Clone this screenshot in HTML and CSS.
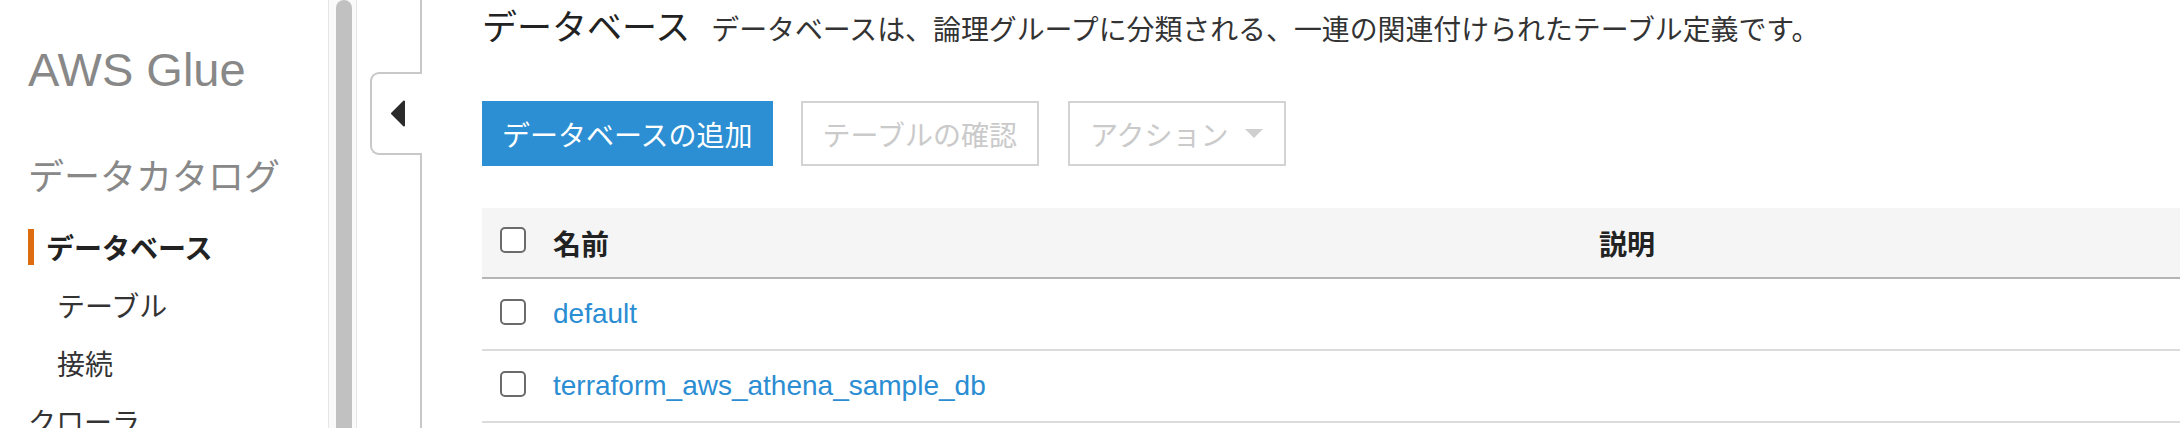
FILE: index.html
```html
<!DOCTYPE html>
<html lang="ja">
<head>
  <meta charset="UTF-8">
  <meta name="viewport" content="width=device-width, initial-scale=1.0">
  <title>AWS Glue - データベース</title>
  <link rel="stylesheet" href="styles.css">
</head>
<body>
  <div class="layout">
    <aside class="sidebar">
      <div class="brand">AWS Glue</div>
      <div class="nav-group">データカタログ</div>
      <ul class="nav-list">
        <li class="nav-item active">データベース</li>
        <li class="nav-item sub">テーブル</li>
        <li class="nav-item sub">接続</li>
        <li class="nav-item top">クローラ</li>
      </ul>
    </aside>

    <div class="scrollbar"><div class="scrollbar-thumb"></div></div>
    <div class="gutter"></div>

    <main class="content">
      <button class="collapse-tab" aria-label="ナビゲーションを閉じる">
        <svg width="16" height="27" viewBox="0 0 16 27">
          <path d="M14 1.5 L14 25.5 L2 13.5 Z" fill="#2b2b2b" stroke="#2b2b2b" stroke-width="2" stroke-linejoin="round"/>
        </svg>
      </button>

      <div class="page-header">
        <h1 class="page-title">データベース</h1>
        <p class="page-desc">データベースは、論理グループに分類される、一連の関連付けられたテーブル定義です。</p>
      </div>

      <div class="toolbar">
        <button class="btn btn-primary">データベースの追加</button>
        <button class="btn btn-disabled">テーブルの確認</button>
        <button class="btn btn-disabled btn-dropdown">
          アクション
          <svg width="18" height="9" viewBox="0 0 18 9">
            <path d="M0 0 H18 L9 9 Z" fill="#cfcfcf"/>
          </svg>
        </button>
      </div>

      <table class="db-table">
        <colgroup>
          <col class="col-check">
          <col class="col-name">
          <col>
        </colgroup>
        <thead>
          <tr>
            <th class="cell-check"><span class="checkbox"></span></th>
            <th>名前</th>
            <th>説明</th>
          </tr>
        </thead>
        <tbody>
          <tr>
            <td class="cell-check"><span class="checkbox"></span></td>
            <td><a href="#" class="db-link">default</a></td>
            <td></td>
          </tr>
          <tr>
            <td class="cell-check"><span class="checkbox"></span></td>
            <td><a href="#" class="db-link">terraform_aws_athena_sample_db</a></td>
            <td></td>
          </tr>
        </tbody>
      </table>
    </main>
  </div>
</body>
</html>
```

FILE: styles.css
```css
:root {
  --font: "Liberation Sans", "Noto Sans CJK JP", sans-serif;
  --text-primary: #222222;
  --text-body: #333333;
  --text-muted: #888888;
  --blue: #2d8fd3;
  --link: #2b8dd2;
  --orange: #dd6b10;
  --border: #c8c8c8;
  --disabled: #d3d3d3;
}

* {
  margin: 0;
  padding: 0;
  box-sizing: border-box;
}

html, body {
  height: 100%;
}

body {
  font-family: var(--font);
  background: #ffffff;
  color: var(--text-body);
  overflow: hidden;
}

.layout {
  display: flex;
  height: 100%;
}

/* sidebar */

.sidebar {
  width: 328px;
  flex-shrink: 0;
  padding: 46px 0 0 28px;
}

.brand {
  font-size: 47px;
  line-height: 47px;
  color: var(--text-muted);
}

.nav-group {
  margin-top: 61px;
  font-size: 36px;
  line-height: 48px;
  color: var(--text-muted);
}

.nav-list {
  list-style: none;
  margin-top: 16px;
}

.nav-item {
  display: flex;
  align-items: center;
  height: 58px;
  font-size: 28px;
  color: var(--text-body);
}

.nav-item.active {
  font-weight: 700;
  color: var(--text-primary);
}

.nav-item.active::before {
  content: "";
  width: 6px;
  height: 36px;
  margin-right: 12px;
  background: var(--orange);
}

.nav-item.sub {
  padding-left: 29px;
}

.nav-item.top {
  padding-left: 0;
}

.scrollbar {
  width: 29px;
  flex-shrink: 0;
  background: #fafafa;
  border-left: 1px solid #e6e6e6;
  border-right: 1px solid #e6e6e6;
}

.scrollbar-thumb {
  width: 16px;
  height: 100%;
  margin-left: 7px;
  background: #c1c1c1;
  border-radius: 8px 8px 0 0;
}

.gutter {
  width: 63px;
  flex-shrink: 0;
}

/* main content */

.content {
  position: relative;
  flex: 1;
  border-left: 2px solid var(--border);
  padding: 6px 0 0 60px;
}

.collapse-tab {
  position: absolute;
  top: 72px;
  left: -52px;
  width: 52px;
  height: 83px;
  background: #ffffff;
  border: 2px solid var(--border);
  border-right: none;
  border-radius: 9px 0 0 9px;
  display: flex;
  align-items: center;
  padding-left: 18px;
  cursor: pointer;
}

.page-header {
  display: flex;
  align-items: baseline;
  gap: 21px;
  line-height: 44px;
}

.page-title {
  font-size: 35px;
  font-weight: 400;
  color: var(--text-primary);
}

.page-desc {
  font-size: 27.9px;
  color: var(--text-body);
}

.toolbar {
  display: flex;
  margin-top: 48px;
  gap: 28px;
}

.btn {
  height: 65px;
  display: inline-flex;
  align-items: center;
  gap: 16px;
  padding: 0 20px;
  font-family: var(--font);
  font-size: 28px;
  border: 2px solid transparent;
  border-radius: 0;
  background: #ffffff;
  cursor: pointer;
}

.btn-primary {
  background: var(--blue);
  border-color: var(--blue);
  color: #ffffff;
  padding: 0 18px;
}

.btn-disabled {
  border-color: var(--disabled);
  color: #cacaca;
  cursor: default;
}

.btn-dropdown {
  margin-left: 1px;
  padding: 0 21px 0 20px;
}

/* table */

.db-table {
  margin-top: 42px;
  width: 100%;
  border-collapse: collapse;
  table-layout: fixed;
  font-size: 28px;
}

.col-check {
  width: 71px;
}

.col-name {
  width: 1046px;
}

.db-table th {
  height: 70px;
  background: #f5f5f5;
  border-bottom: 2px solid #b5b5b5;
  text-align: left;
  font-weight: 700;
  color: var(--text-primary);
  vertical-align: middle;
}

.db-table td {
  height: 72px;
  border-bottom: 2px solid #dcdcdc;
  vertical-align: middle;
}

.cell-check {
  padding-left: 18px;
}

.checkbox {
  display: inline-block;
  width: 26px;
  height: 26px;
  border: 2px solid #6b6b6b;
  border-radius: 5px;
  background: #ffffff;
  vertical-align: middle;
  margin-bottom: 6px;
}

.db-link {
  color: var(--link);
  text-decoration: none;
}
```
